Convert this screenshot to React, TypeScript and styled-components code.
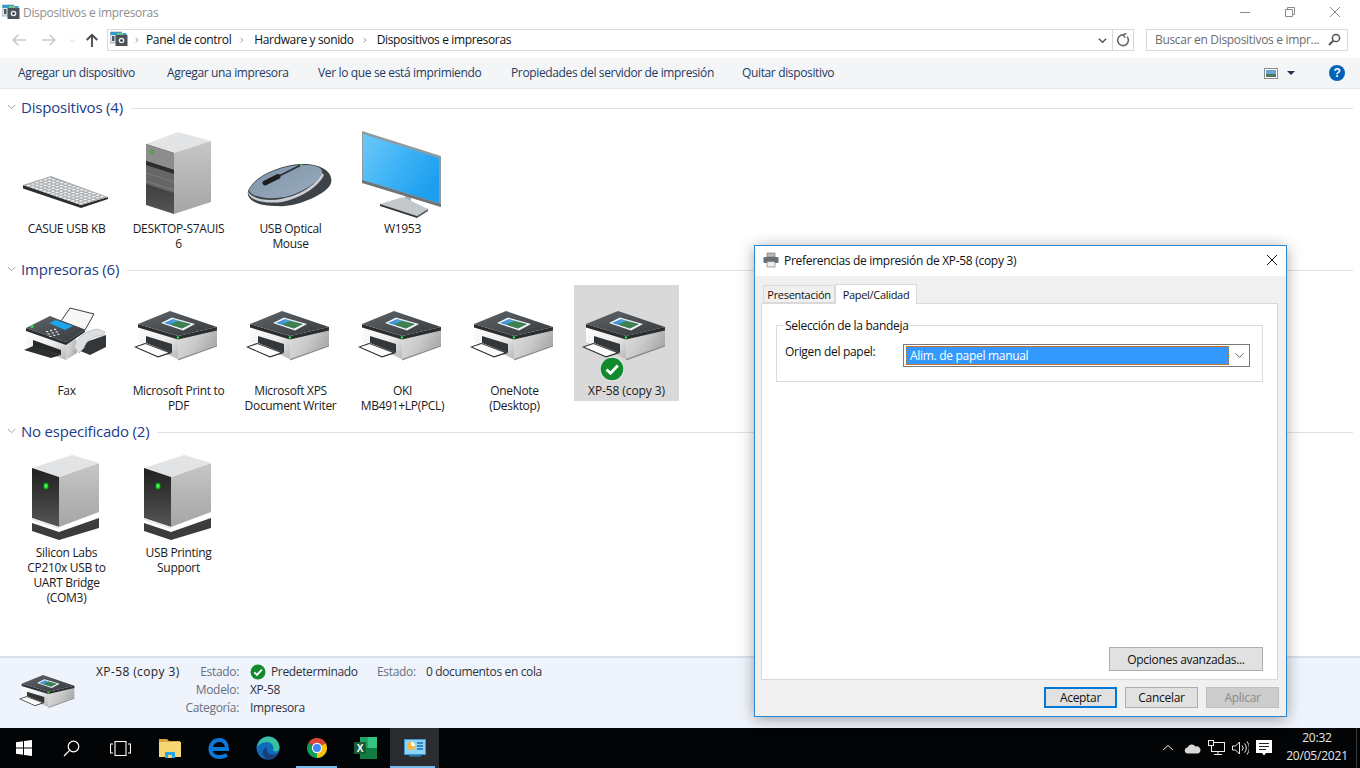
import React from 'react'
import styled, { createGlobalStyle } from 'styled-components'

const GlobalStyle = createGlobalStyle`
	html, body {
		margin: 0;
		padding: 0;
		background: #fff;
	}
	* {
		box-sizing: border-box;
	}
`

const Screen = styled.div`
	position: relative;
	display: flex;
	flex-direction: column;
	width: 1360px;
	height: 768px;
	overflow: hidden;
	background: #fff;
	color: #1a1a1a;
	font-family: 'Open Sans', 'Noto Sans', sans-serif;
	font-size: 12px;
	letter-spacing: -0.32px;
`

const TitleBar = styled.div`
	display: flex;
	align-items: center;
	height: 24px;
	padding-left: 2px;
	color: #8f8f8f;
`

const TitleText = styled.span`
	margin-left: 3px;
	flex: 1;
`

const CaptionButton = styled.div<{ $last?: boolean }>`
	display: flex;
	align-items: center;
	justify-content: center;
	width: 45px;
	height: 24px;
	margin-right: ${p => (p.$last ? '3px' : '0')};
`

const NavBar = styled.div`
	display: flex;
	align-items: flex-start;
	height: 34px;
	padding: 5px 12px 0 0;
`

const NavArrows = styled.div`
	display: flex;
	align-items: center;
	width: 107px;
	height: 22px;
	padding-left: 12px;
`

const NavArrow = styled.div<{ $w: number; $gap?: number }>`
	display: flex;
	justify-content: center;
	width: ${p => p.$w}px;
	margin-left: ${p => p.$gap ?? 0}px;
`

const Breadcrumb = styled.div`
	display: flex;
	align-items: center;
	width: 1027px;
	height: 22px;
	padding: 0 0 2px 2px;
	border: 1px solid #d9d9d9;
	color: #111;
	letter-spacing: -0.36px;
`

const Crumb = styled.span`
	white-space: nowrap;
`

const CrumbSep = styled.span<{ $w?: number }>`
	display: flex;
	justify-content: center;
	width: ${p => p.$w ?? 23}px;
	padding-top: 2px;
`

const BreadcrumbSpacer = styled.div`
	flex: 1;
`

const ComboArrow = styled.div`
	display: flex;
	align-items: center;
	justify-content: center;
	width: 20px;
	height: 20px;
	margin-bottom: -2px;
	border-right: 1px solid #d9d9d9;
`

const Refresh = styled.div`
	display: flex;
	align-items: center;
	justify-content: center;
	width: 20px;
	margin-bottom: -2px;
`

const SearchBox = styled.div`
	display: flex;
	align-items: center;
	justify-content: space-between;
	width: 202px;
	height: 22px;
	margin-left: 12px;
	padding: 0 6px 1px 8px;
	border: 1px solid #d9d9d9;
	color: #6d6d6d;
`

const Toolbar = styled.div`
	display: flex;
	align-items: center;
	height: 31px;
	padding-left: 18px;
	padding-right: 15px;
	background: #f4f5f7;
	border-bottom: 1px solid #e6e6e6;
	color: #1e3a5f;
	letter-spacing: -0.36px;
`

const ToolButton = styled.span<{ $width: number }>`
	width: ${p => p.$width}px;
	padding-bottom: 1px;
	white-space: nowrap;
`

const ToolSpacer = styled.div`
	flex: 1;
`

const ViewButton = styled.div`
	display: flex;
	align-items: center;
	gap: 9px;
	margin-right: 34px;
`

const Content = styled.main`
	flex: 1;
	min-height: 0;
`

const Section = styled.section`
	height: 162px;
	padding-top: 8px;
`

const SectionHeader = styled.div`
	display: flex;
	align-items: center;
	height: 20px;
	padding: 0 7px 0 7px;
`

const SectionTitle = styled.h2`
	margin: 0 8px 0 4px;
	color: #1e3b8a;
	font-size: 15px;
	font-weight: 400;
	letter-spacing: -0.2px;
	white-space: nowrap;
`

const SectionRule = styled.div`
	flex: 1;
	height: 1px;
	margin-top: 2px;
	background: #e2e2e2;
`

const ItemRow = styled.div`
	display: flex;
	align-items: flex-start;
	gap: 7px;
	margin-top: 6px;
	padding-left: 14px;
`

const Item = styled.div<{ $selected?: boolean }>`
	position: relative;
	width: 105px;
	padding: 2px 0 3px;
	background: ${p => (p.$selected ? '#d9d9d9' : 'transparent')};
	text-align: center;
	line-height: 15px;
	letter-spacing: ${p => (p.$selected ? '-0.1px' : 'inherit')};
`

const IconSlot = styled.div`
	width: 96px;
	height: 96px;
	margin-left: 5px;
	svg {
		display: block;
	}
`

const CheckBadge = styled.div`
	position: absolute;
	left: 26px;
	top: 72px;
	width: 24px;
	height: 24px;
	svg {
		display: block;
	}
`

const DetailsPane = styled.footer`
	display: flex;
	height: 72px;
	border-top: 2px solid #d7e1ee;
	background: #eff3fb;
`

const DetailsIcon = styled.div`
	width: 64px;
	height: 64px;
	margin: 1px 15px 0 17px;
	svg {
		display: block;
	}
`

const DetailsName = styled.div`
	width: 87px;
	padding-top: 5px;
	line-height: 18px;
	color: #222;
	letter-spacing: 0.38px;
	white-space: nowrap;
`

const Fields = styled.div`
	display: grid;
	grid-template-columns: 56px 116px 38px auto;
	grid-auto-rows: 18px;
	column-gap: 11px;
	padding-top: 5px;
	line-height: 18px;
`

const FieldLabel = styled.span`
	text-align: right;
	color: #67707c;
	white-space: nowrap;
`

const FieldValue = styled.span`
	display: flex;
	align-items: center;
	gap: 5px;
	color: #2c3340;
	letter-spacing: -0.36px;
	white-space: nowrap;
`

const Taskbar = styled.nav`
	display: flex;
	align-items: center;
	height: 40px;
	background: #030406;
	color: #e8e8e8;
`

const TaskSlot = styled.div<{ $active?: boolean; $running?: boolean }>`
	position: relative;
	display: flex;
	align-items: center;
	justify-content: center;
	width: 49px;
	height: 40px;
	background: ${p => (p.$active ? '#2b2c2f' : 'transparent')};
	&:first-child {
		width: 47px;
	}
	&::after {
		content: '';
		display: ${p => (p.$active || p.$running ? 'block' : 'none')};
		position: absolute;
		bottom: 0;
		left: ${p => (p.$active ? '0' : '4px')};
		right: 4px;
		height: 2px;
		background: #76b9ed;
	}
`

const TaskSpacer = styled.div`
	flex: 1;
`

const TrayIcon = styled.div`
	display: flex;
	align-items: center;
	justify-content: center;
	width: 24px;
	height: 40px;
`

const Clock = styled.div`
	width: 78px;
	margin: 0 0 2px 2px;
	text-align: center;
	line-height: 18px;
	letter-spacing: -0.2px;
`

const ShowDesktop = styled.div`
	width: 1px;
	height: 40px;
	margin: 0 3px 0 0;
	background: #3a3a3a;
`

const Dialog = styled.div`
	position: absolute;
	left: 754px;
	top: 245px;
	display: flex;
	flex-direction: column;
	width: 533px;
	height: 472px;
	border: 1px solid #2c88d2;
	background: #f0f0f0;
	box-shadow: 0 2px 14px rgba(0, 0, 0, 0.35);
	letter-spacing: -0.3px;
`

const DialogTitle = styled.div`
	display: flex;
	align-items: center;
	height: 30px;
	padding: 0 8px 2px;
	background: #fff;
	color: #111;
`

const DialogTitleText = styled.span`
	flex: 1;
	margin-left: 5px;
`

const Tabs = styled.div`
	position: relative;
	z-index: 1;
	display: flex;
	align-items: flex-end;
	height: 27px;
	padding-left: 8px;
`

const Tab = styled.div<{ $active?: boolean }>`
	display: flex;
	align-items: center;
	justify-content: center;
	height: ${p => (p.$active ? '20px' : '18px')};
	width: ${p => (p.$active ? '82px' : '72px')};
	margin-bottom: ${p => (p.$active ? '-1px' : '0')};
	border: 1px solid #d9d9d9;
	border-bottom: ${p => (p.$active ? 'none' : '1px solid #d9d9d9')};
	background: ${p => (p.$active ? '#fff' : '#f0f0f0')};
	color: #111;
	font-size: 11px;
`

const TabPanel = styled.div`
	display: flex;
	flex-direction: column;
	justify-content: space-between;
	height: 377px;
	margin: 0 8px 0 6px;
	padding: 14px 14px 8px 14px;
	border: 1px solid #d9d9d9;
	background: #fff;
`

const GroupBox = styled.fieldset`
	display: flex;
	align-items: flex-start;
	height: 64px;
	margin: 0;
	padding: 0 12px 0 8px;
	border: 1px solid #dcdcdc;
`

const GroupLegend = styled.legend`
	margin-left: -1px;
	padding: 0 1px;
	color: #111;
	line-height: 15px;
`

const SourceRow = styled.div`
	display: flex;
	align-items: flex-start;
	width: 100%;
	margin-top: 11px;
`

const SourceLabel = styled.span`
	width: 118px;
	color: #111;
	line-height: 15px;
`

const Combo = styled.div`
	display: flex;
	align-items: center;
	flex: 1;
	height: 23px;
	padding: 1px 0 1px 2px;
	border: 1px solid #7a7a7a;
	background: #fff;
`

const ComboValue = styled.div`
	flex: 1;
	height: 19px;
	padding-left: 3px;
	border: 1px dotted #c9701e;
	background: #3399ff;
	color: #fff;
	line-height: 17px;
`

const ComboChevron = styled.div`
	display: flex;
	justify-content: center;
	width: 20px;
`

const AdvancedRow = styled.div`
	display: flex;
	justify-content: flex-end;
`

const DialogButton = styled.button<{ $width: number; $primary?: boolean; $disabled?: boolean }>`
	width: ${p => p.$width}px;
	height: ${p => (p.$width > 100 ? 24 : 21)}px;
	padding: 0;
	border: ${p => (p.$primary ? '2px solid #0078d7' : p.$disabled ? '1px solid #bfbfbf' : '1px solid #adadad')};
	background: ${p => (p.$disabled ? '#cccccc' : '#e1e1e1')};
	color: ${p => (p.$disabled ? '#8a8a8a' : '#111')};
	font: inherit;
	letter-spacing: inherit;
`

const DialogFooter = styled.div`
	display: flex;
	justify-content: flex-end;
	gap: 8px;
	padding: 7px 7px 0 0;
`

const Thin = ({ d, size = 12, box = 12, color = '#555', w = 1 }: { d: string; size?: number; box?: number; color?: string; w?: number }) => (
	<svg width={size} height={size} viewBox={`0 0 ${box} ${box}`} fill="none" stroke={color} strokeWidth={w}>
		<path d={d} />
	</svg>
)

const ExplorerGlyph = () => (
	<svg width="18" height="16" viewBox="0 0 18 16">
		<rect x="0" y="1" width="12" height="11" fill="#dfe6ea" stroke="#7c8a92" strokeWidth="0.6" />
		<rect x="0.5" y="1" width="11" height="3" fill="#2f9fc9" />
		<rect x="2" y="5" width="2.5" height="5" fill="#4d5a62" />
		<rect x="5.5" y="4" width="12" height="11" fill="#4a5359" />
		<rect x="7" y="2" width="5" height="2" fill="#7cc36a" />
		<rect x="12.5" y="2" width="4" height="2" fill="#2f9fc9" />
		<circle cx="11.5" cy="9.5" r="2.8" fill="#eef1f3" />
		<circle cx="11.5" cy="9.5" r="1.3" fill="#23282c" />
	</svg>
)

const Defs = () => (
	<defs>
		<linearGradient id="frontFace" x1="0" y1="0" x2="0.9" y2="1">
			<stop offset="0" stopColor="#ffffff" />
			<stop offset="0.55" stopColor="#eeeeee" />
			<stop offset="1" stopColor="#bdbdbd" />
		</linearGradient>
		<linearGradient id="sideFace" x1="0" y1="0" x2="1" y2="0.5">
			<stop offset="0" stopColor="#e2e2e2" />
			<stop offset="0.55" stopColor="#c9c9c9" />
			<stop offset="1" stopColor="#a9a9a9" />
		</linearGradient>
		<linearGradient id="lidFace" x1="0" y1="0" x2="0.9" y2="1">
			<stop offset="0" stopColor="#60656a" />
			<stop offset="1" stopColor="#383c40" />
		</linearGradient>
		<linearGradient id="towerSide" x1="0" y1="0" x2="0" y2="1">
			<stop offset="0" stopColor="#c6c6c6" />
			<stop offset="1" stopColor="#a5a5a5" />
		</linearGradient>
		<linearGradient id="darkFront" x1="0" y1="0" x2="0" y2="1">
			<stop offset="0" stopColor="#1f1f1f" />
			<stop offset="1" stopColor="#565656" />
		</linearGradient>
		<linearGradient id="screenBlue" x1="0" y1="0" x2="1" y2="0.6">
			<stop offset="0" stopColor="#6cc9f8" />
			<stop offset="0.55" stopColor="#3db2f5" />
			<stop offset="1" stopColor="#1d9ff0" />
		</linearGradient>
		<linearGradient id="mouseTop" x1="0" y1="0" x2="1" y2="1">
			<stop offset="0" stopColor="#7d93a9" />
			<stop offset="1" stopColor="#9cadbe" />
		</linearGradient>
		<linearGradient id="photoSky" x1="0" y1="0" x2="1" y2="0">
			<stop offset="0" stopColor="#2f8fdc" />
			<stop offset="1" stopColor="#76b6de" />
		</linearGradient>
		<radialGradient id="ledGlow">
			<stop offset="0" stopColor="#7dff7d" />
			<stop offset="0.6" stopColor="#19d12c" />
			<stop offset="1" stopColor="#0c6a1a" />
		</radialGradient>
	</defs>
)

const PrinterIcon = ({ size = 96 }: { size?: number }) => (
	<svg width={size} height={size} viewBox="0 0 96 96">
		<Defs />
		<polygon points="47,50 86,40 86,58 47,72" fill="url(#sideFace)" />
		<polygon points="47,72 86,58 86,59.5 47,73.5" fill="#8a8a8a" />
		<polygon points="7,38 47,50 47,72 7,55" fill="url(#frontFace)" />
		<polygon points="7,37 47,49 86,40 86,43.5 47,52.5 7,40.5" fill="#2b2e31" />
		<polygon points="7,37 39,24 86,40 47,49" fill="url(#lidFace)" />
		<polygon points="15,49 41,57 41,66 15,56" fill="#34373a" />
		<polygon points="3,60 14,56 41,66 27,70.5" fill="#2a2c2e" />
		<polygon points="5.5,60 14.5,57 37.5,65.8 27,69.3" fill="#fdfdfd" />
		<polygon points="30,36 41,30.5 64,37 52,43.5" fill="#f6f6f6" />
		<polygon points="33,36 42,32 60,37 51,41.5" fill="url(#photoSky)" />
		<polygon points="39,37.5 47,34 60,37 51,41.5" fill="#3f7f4f" />
		<circle cx="47" cy="50.5" r="1.3" fill="#35e04a" />
	</svg>
)

const FaxIcon = () => (
	<svg width="96" height="96" viewBox="0 0 96 96">
		<Defs />
		<polygon points="42,34 51,21 75,27 66,43" fill="#f7f7f7" stroke="#3c3f42" strokeWidth="1" />
		<polygon points="59,63 64,56 87,48 87,60 71,68" fill="#33373a" />
		<polygon points="47,55 57,52 58,66 47,73" fill="url(#sideFace)" />
		<polygon points="7,43 47,56 47,73 7,58" fill="url(#frontFace)" />
		<polygon points="7,41 31,29 66,43 47,55" fill="url(#lidFace)" />
		<polygon points="7,41 47,55 66,43 66,45 47,58 7,44" fill="#2b2e31" />
		<polygon points="30,36 37,33 54,39 46,43" fill="#1fa4ee" />
		<g fill="#e6e6e6">
			{[0, 1, 2].map(r =>
				[0, 1, 2].map(c => <rect key={`${r}-${c}`} x={27 + c * 4 + r * 1.6} y={44 + r * 2.4 - c * 1.1} width="2.2" height="1.2" />),
			)}
		</g>
		<circle cx="13" cy="39.5" r="1.5" fill="#35e04a" />
		<polygon points="14,53 42,63 42,68 14,60" fill="#26282a" />
		<polygon points="5,63 14,59 42,68 32,71" fill="#2d2f31" />
		<path d="M55 60 C58 50 68 43 79 42 L86 45 L84 49 C74 48 67 54 65 61 L60 66 Z" fill="#dcdfe0" stroke="#a6abae" strokeWidth="0.6" />
	</svg>
)

const KeyboardIcon = () => {
	const keys = []
	const rows = 6
	const cols = 14
	for (let r = 0; r < rows; r++) {
		for (let c = 0; c < cols; c++) {
			const u = (v: number) => (c + v) / cols
			const t = (v: number) => (r + v) / rows
			const pt = (a: number, b: number) => `${6 + 56 * u(a) + 25 * t(b)},${60.5 + 19.5 * u(a) - 8.5 * t(b)}`
			keys.push(<polygon key={`${r}-${c}`} points={`${pt(0.16, 0.16)} ${pt(0.78, 0.16)} ${pt(0.78, 0.78)} ${pt(0.16, 0.78)}`} fill="#f4f4f4" />)
		}
	}
	return (
		<svg width="96" height="96" viewBox="0 0 96 96">
			<Defs />
			<polygon points="4,60 62,80 89,72 89,74 62,83 4,63.5" fill="#2b2d2f" />
			<polygon points="4,60 32,51 89,72 62,80" fill="#a9adb0" />
			{keys}
		</svg>
	)
}

const TowerIcon = () => (
	<svg width="96" height="96" viewBox="0 0 96 96">
		<Defs />
		<polygon points="15,19 47,7 80,16 43,28" fill="#e3e4e6" />
		<polygon points="43,28 80,16 80,77 43,89" fill="url(#towerSide)" />
		<polygon points="15,19 43,28 43,89 15,80" fill="url(#darkFront)" />
		<polygon points="15,19 43,28 43,45 15,36" fill="#8d8d8d" />
		<polygon points="15,36 43,45 43,49 15,40" fill="#2d2d2d" />
		<polygon points="15,40 43,49 43,68 15,59" fill="#666" />
		<line x1="15" y1="48" x2="43" y2="57" stroke="#888" strokeWidth="0.6" />
		<line x1="15" y1="56" x2="43" y2="65" stroke="#888" strokeWidth="0.6" />
		<circle cx="21" cy="27" r="1.7" fill="url(#ledGlow)" />
	</svg>
)

const MouseIcon = () => (
	<svg width="96" height="96" viewBox="0 0 96 96">
		<Defs />
		<path d="M5 66 C10 52 36 40 58 39 C76 38 91 46 88 58 C85 69 52 83 35 81 C16 81 3 76 5 66 Z" fill="#3e4347" />
		<path d="M5 66 C7 73 24 77 38 74 C54 71 72 62 79 48 L81 50 C75 63 55 74 39 77 C23 79 5 76 5 66 Z" fill="#c9cfd4" />
		<path d="M6 65 C12 52 36 41 58 40 C72 39.5 80 42 79 48 C75 58 58 68 42 72 C26 75 7 72 6 65 Z" fill="url(#mouseTop)" />
		<path d="M22 58 L58 40" stroke="#2a2d30" strokeWidth="1.8" fill="none" />
		<path d="M22 58 L35 51.5" stroke="#1c1e20" strokeWidth="5" strokeLinecap="round" fill="none" />
		<circle cx="58" cy="40" r="1" fill="#35e04a" />
	</svg>
)

const MonitorIcon = () => (
	<svg width="96" height="96" viewBox="0 0 96 96">
		<Defs />
		<polygon points="50,70 56,72 56,79 50,78" fill="#a9b0b5" />
		<polygon points="25,79 48,72 73,84 62,91" fill="#c3c8cb" />
		<polygon points="25,79 62,91 62,93 25,81" fill="#34373a" />
		<polygon points="62,91 73,84 73,86 62,93" fill="#55595c" />
		<polygon points="7,6 86,31 86,82 7,57" fill="#8f9aa2" />
		<polygon points="8,9 84,33 84,78 8,55" fill="url(#screenBlue)" />
		<polygon points="7,55 86,79 86,82 7,58" fill="#6d7478" />
	</svg>
)

const DriveIcon = () => (
	<svg width="96" height="96" viewBox="0 0 96 96">
		<Defs />
		<polygon points="13,74 40,83 80,69 80,79 40,91 13,82" fill="#3c3c3c" />
		<polygon points="40,28 80,14 80,63 40,78" fill="url(#towerSide)" />
		<polygon points="13,19 53,6 80,14 40,28" fill="#e2e3e5" />
		<polygon points="13,19 40,28 40,78 13,69" fill="url(#darkFront)" />
		<polygon points="13,69 40,78 40,80 13,71" fill="#e8e8e8" />
		<ellipse cx="27" cy="37" rx="2.8" ry="3.6" fill="url(#ledGlow)" />
	</svg>
)

const SmallCheck = ({ size }: { size: number }) => (
	<svg width={size} height={size} viewBox="0 0 24 24">
		<circle cx="12" cy="12" r="12" fill="#fff" opacity="0.6" />
		<circle cx="12" cy="12" r="11.3" fill="#128a2e" />
		<path d="M6.5 12.5 L10.5 16.3 L17.8 8.5" fill="none" stroke="#fff" strokeWidth="2.8" />
	</svg>
)

const ChromeIcon = () => (
	<svg width="22" height="22" viewBox="0 0 24 24">
		<path d="M12 12 L2.5 6.5 A11 11 0 0 1 21.5 6.5 Z" fill="#db4437" />
		<path d="M12 12 L21.5 6.5 A11 11 0 0 1 12 23 Z" fill="#f4c20d" />
		<path d="M12 12 L12 23 A11 11 0 0 1 2.5 6.5 Z" fill="#0f9d58" />
		<circle cx="12" cy="12" r="5.6" fill="#fff" />
		<circle cx="12" cy="12" r="4.4" fill="#4285f4" />
	</svg>
)

const EdgeOldIcon = () => (
	<svg width="24" height="24" viewBox="0 0 24 24" fill="none">
		<path d="M5 13 H20 C20 7 17 4 12.5 4 C7 4 3.5 8 3.5 13 C3.5 18 7.5 21 12.5 21 C15.5 21 18 20 20 19" stroke="#0a78d7" strokeWidth="4" />
	</svg>
)

const EdgeNewIcon = () => (
	<svg width="24" height="24" viewBox="0 0 24 24">
		<circle cx="12" cy="12" r="11.5" fill="#0f6cbd" />
		<path d="M1 12 C2 4 8 0.5 12 0.5 C19 0.5 23.5 6 23.5 12 C23.5 15 20 16 17 15 C19 10 15 6 11 6 C6 6 2 9 1 12 Z" fill="#35c1a0" />
		<path d="M8 21 C5 17 7 12 11 11 C9 15 13 19 18 18.5 C19.5 18.3 21 18 22 17 C20 21 16 23.5 12 23.5 C10.5 23.5 9 22.5 8 21 Z" fill="#1b3f7a" />
	</svg>
)

const FolderIcon = () => (
	<svg width="24" height="22" viewBox="0 0 24 22">
		<path d="M1 2 H9 L11 4 H22 V6 H1 Z" fill="#d9a93f" />
		<rect x="1" y="5" width="22" height="15" fill="#f7d774" />
		<rect x="7" y="15" width="10" height="6" fill="#2aa7e0" />
		<rect x="10" y="18" width="4" height="3" fill="#f7d774" />
	</svg>
)

const ExcelIcon = () => (
	<svg width="25" height="24" viewBox="0 0 25 24">
		<rect x="7" y="1" width="17" height="22" fill="#21a366" />
		<rect x="7" y="12" width="17" height="11" fill="#107c41" />
		<rect x="15" y="1" width="9" height="11" fill="#33c481" />
		<rect x="1" y="6" width="12" height="12" fill="#185c37" />
		<text x="7" y="15.5" textAnchor="middle" fill="#fff" fontSize="10" fontWeight="700" fontFamily="'Liberation Sans', sans-serif">
			X
		</text>
	</svg>
)

const ControlPanelIcon = () => (
	<svg width="22" height="18" viewBox="0 0 22 18">
		<rect x="0.5" y="0.5" width="21" height="15" fill="#8fd3f4" stroke="#3a98d8" />
		<circle cx="7" cy="7" r="4" fill="#f5b83d" />
		<path d="M7 7 V3 A4 4 0 0 1 11 7 Z" fill="#fff" />
		<path d="M13 4 H19 M13 7 H19 M13 10 H19" stroke="#1d6fb8" strokeWidth="1.4" />
		<rect x="5" y="15.5" width="12" height="2" fill="#2d7fc0" />
	</svg>
)

const Chevron = () => <Thin d="M3.5 2.5 L6.5 5.5 L3.5 8.5" size={9} color="#888" w={1.2} />

type Entry = { icon: React.ReactNode; lines: string[]; selected?: boolean }

const sections: { title: string; items: Entry[] }[] = [
	{
		title: 'Dispositivos (4)',
		items: [
			{ icon: <KeyboardIcon />, lines: ['CASUE USB KB'] },
			{ icon: <TowerIcon />, lines: ['DESKTOP-S7AUIS', '6'] },
			{ icon: <MouseIcon />, lines: ['USB Optical', 'Mouse'] },
			{ icon: <MonitorIcon />, lines: ['W1953'] },
		],
	},
	{
		title: 'Impresoras (6)',
		items: [
			{ icon: <FaxIcon />, lines: ['Fax'] },
			{ icon: <PrinterIcon />, lines: ['Microsoft Print to', 'PDF'] },
			{ icon: <PrinterIcon />, lines: ['Microsoft XPS', 'Document Writer'] },
			{ icon: <PrinterIcon />, lines: ['OKI', 'MB491+LP(PCL)'] },
			{ icon: <PrinterIcon />, lines: ['OneNote', '(Desktop)'] },
			{ icon: <PrinterIcon />, lines: ['XP-58 (copy 3)'], selected: true },
		],
	},
	{
		title: 'No especificado (2)',
		items: [
			{ icon: <DriveIcon />, lines: ['Silicon Labs', 'CP210x USB to', 'UART Bridge', '(COM3)'] },
			{ icon: <DriveIcon />, lines: ['USB Printing', 'Support'] },
		],
	},
]

const App = () => (
	<Screen>
		<GlobalStyle />
		<TitleBar>
			<ExplorerGlyph />
			<TitleText>Dispositivos e impresoras</TitleText>
			<CaptionButton>
				<Thin d="M1 6.5 H11" color="#8a8a8a" />
			</CaptionButton>
			<CaptionButton>
				<Thin d="M1.5 3.5 H8.5 V10.5 H1.5 Z M3.5 3.5 V1.5 H10.5 V8.5 H8.5" color="#8a8a8a" />
			</CaptionButton>
			<CaptionButton $last>
				<Thin d="M1 1 L11 11 M11 1 L1 11" color="#8a8a8a" />
			</CaptionButton>
		</TitleBar>
		<NavBar>
			<NavArrows>
				<NavArrow $w={14}>
					<Thin d="M1 6 H12 M5.5 1.5 L1 6 L5.5 10.5" size={14} color="#c9c9c9" w={1.4} />
				</NavArrow>
				<NavArrow $w={16} $gap={15}>
					<Thin d="M0 6 H11 M6.5 1.5 L11 6 L6.5 10.5" size={14} color="#c9c9c9" w={1.4} />
				</NavArrow>
				<NavArrow $w={10} $gap={10}>
					<Thin d="M2 4.5 L6 8 L10 4.5" size={9} color="#c9c9c9" />
				</NavArrow>
				<NavArrow $w={16} $gap={7}>
					<Thin d="M6 12 V1.5 M1.5 6 L6 1.5 L10.5 6" size={14} color="#4a4a4a" w={1.6} />
				</NavArrow>
			</NavArrows>
			<Breadcrumb>
				<ExplorerGlyph />
				<CrumbSep $w={18}>
					<Chevron />
				</CrumbSep>
				<Crumb>Panel de control</Crumb>
				<CrumbSep>
					<Chevron />
				</CrumbSep>
				<Crumb>Hardware y sonido</Crumb>
				<CrumbSep>
					<Chevron />
				</CrumbSep>
				<Crumb>Dispositivos e impresoras</Crumb>
				<BreadcrumbSpacer />
				<ComboArrow>
					<Thin d="M2 4 L6 8 L10 4" size={11} color="#555" w={1.6} />
				</ComboArrow>
				<Refresh>
					<Thin d="M9.5 3.2 A4.6 4.6 0 1 1 6 1.6 M6 1.6 L8.8 0.2 M6 1.6 L7.8 4" size={14} color="#666" w={1.3} />
				</Refresh>
			</Breadcrumb>
			<SearchBox>
				<span>Buscar en Dispositivos e impr...</span>
				<svg width="13" height="13" viewBox="0 0 13 13" fill="none" stroke="#555" strokeWidth="1.5">
					<circle cx="8" cy="5" r="3.6" />
					<path d="M5.4 7.6 L1 12" strokeWidth="2" />
				</svg>
			</SearchBox>
		</NavBar>
		<Toolbar>
			<ToolButton $width={149}>Agregar un dispositivo</ToolButton>
			<ToolButton $width={151}>Agregar una impresora</ToolButton>
			<ToolButton $width={193}>Ver lo que se está imprimiendo</ToolButton>
			<ToolButton $width={231}>Propiedades del servidor de impresión</ToolButton>
			<ToolButton $width={100}>Quitar dispositivo</ToolButton>
			<ToolSpacer />
			<ViewButton>
				<svg width="14" height="11" viewBox="0 0 14 11">
					<rect x="0.5" y="0.5" width="13" height="10" fill="#fff" stroke="#8c8c8c" />
					<rect x="2" y="2" width="10" height="4" fill="#6aa5d8" />
					<rect x="2" y="6" width="10" height="3" fill="#4d7a5f" />
				</svg>
				<svg width="8" height="4" viewBox="0 0 8 4">
					<path d="M0 0 H8 L4 4 Z" fill="#1e2f4f" />
				</svg>
			</ViewButton>
			<svg width="16" height="16" viewBox="0 0 16 16">
				<circle cx="8" cy="8" r="8" fill="#0063b8" />
				<text x="8" y="12.2" textAnchor="middle" fill="#fff" fontSize="12" fontWeight="700" fontFamily="'Liberation Sans', sans-serif">
					?
				</text>
			</svg>
		</Toolbar>
		<Content>
			{sections.map(section => (
				<Section key={section.title}>
					<SectionHeader>
						<Thin d="M1 3.5 L5.5 8 L10 3.5" size={10} color="#8293a8" />
						<SectionTitle>{section.title}</SectionTitle>
						<SectionRule />
					</SectionHeader>
					<ItemRow>
						{section.items.map(item => (
							<Item key={item.lines.join(' ')} $selected={item.selected}>
								<IconSlot>{item.icon}</IconSlot>
								{item.selected && (
									<CheckBadge>
										<SmallCheck size={24} />
									</CheckBadge>
								)}
								{item.lines.map(line => (
									<div key={line}>{line}</div>
								))}
							</Item>
						))}
					</ItemRow>
				</Section>
			))}
		</Content>
		<DetailsPane>
			<DetailsIcon>
				<PrinterIcon size={64} />
			</DetailsIcon>
			<DetailsName>XP-58 (copy 3)</DetailsName>
			<Fields>
				<FieldLabel>Estado:</FieldLabel>
				<FieldValue>
					<SmallCheck size={16} />
					Predeterminado
				</FieldValue>
				<FieldLabel>Estado:</FieldLabel>
				<FieldValue>0 documentos en cola</FieldValue>
				<FieldLabel>Modelo:</FieldLabel>
				<FieldValue>XP-58</FieldValue>
				<span />
				<span />
				<FieldLabel>Categoría:</FieldLabel>
				<FieldValue>Impresora</FieldValue>
			</Fields>
		</DetailsPane>
		<Taskbar>
			<TaskSlot>
				<svg width="16" height="16" viewBox="0 0 16 16">
					<path d="M0 2.2 L7 1.2 V7.5 H0 Z M8 1 L16 0 V7.5 H8 Z M0 8.5 H7 V14.8 L0 13.8 Z M8 8.5 H16 V16 L8 15 Z" fill="#fff" />
				</svg>
			</TaskSlot>
			<TaskSlot>
				<svg width="17" height="17" viewBox="0 0 17 17" fill="none" stroke="#fff" strokeWidth="1.2">
					<circle cx="10.5" cy="6.5" r="5.3" />
					<path d="M6.6 10.4 L1 16" />
				</svg>
			</TaskSlot>
			<TaskSlot>
				<svg width="21" height="15" viewBox="0 0 21 15" fill="none" stroke="#fff" strokeWidth="1.1">
					<rect x="5" y="0.5" width="11" height="14" />
					<path d="M3 3 H0.5 V12 H3 M18 3 H20.5 V12 H18" />
				</svg>
			</TaskSlot>
			<TaskSlot>
				<FolderIcon />
			</TaskSlot>
			<TaskSlot>
				<EdgeOldIcon />
			</TaskSlot>
			<TaskSlot>
				<EdgeNewIcon />
			</TaskSlot>
			<TaskSlot $running>
				<ChromeIcon />
			</TaskSlot>
			<TaskSlot>
				<ExcelIcon />
			</TaskSlot>
			<TaskSlot $active>
				<ControlPanelIcon />
			</TaskSlot>
			<TaskSpacer />
			<TrayIcon>
				<Thin d="M1 8 L6 3.5 L11 8" size={12} color="#eee" />
			</TrayIcon>
			<TrayIcon>
				<svg width="17" height="11" viewBox="0 0 17 11">
					<path d="M3 10.5 A3 3 0 0 1 3.5 4.6 A4.4 4.4 0 0 1 11.5 3.6 A3.6 3.6 0 0 1 14 10.5 Z" fill="#d8d8d8" />
				</svg>
			</TrayIcon>
			<TrayIcon>
				<svg width="17" height="16" viewBox="0 0 17 16" fill="none" stroke="#eee">
					<rect x="3.5" y="2.5" width="13" height="9" />
					<rect x="0.5" y="0.5" width="5" height="5" fill="#030406" />
					<path d="M10 11.5 V14.5 M6 14.5 H14" />
				</svg>
			</TrayIcon>
			<TrayIcon>
				<svg width="17" height="14" viewBox="0 0 17 14" fill="none" stroke="#eee">
					<path d="M0.5 5 H3.5 L7.5 1 V13 L3.5 9 H0.5 Z" />
					<path d="M10 4.5 A3.5 3.5 0 0 1 10 9.5 M12.5 2.5 A6.5 6.5 0 0 1 12.5 11.5 M15 0.5 A10 10 0 0 1 15 13.5" />
				</svg>
			</TrayIcon>
			<TrayIcon>
				<svg width="16" height="16" viewBox="0 0 16 16">
					<path d="M0 0 H16 V13 H10 L8 15.5 L6 13 H0 Z" fill="#fff" />
					<path d="M3 3.5 H13 M3 6.5 H13 M3 9.5 H10" stroke="#222" strokeWidth="1" />
				</svg>
			</TrayIcon>
			<Clock>
				<div>20:32</div>
				<div>20/05/2021</div>
			</Clock>
			<ShowDesktop />
		</Taskbar>
		<Dialog>
			<DialogTitle>
				<svg width="16" height="16" viewBox="0 0 16 16">
					<rect x="4" y="1" width="8" height="4" fill="#b8b8b8" stroke="#6f6f6f" strokeWidth="0.6" />
					<rect x="0.5" y="5" width="15" height="6" rx="1" fill="#6a6f73" />
					<rect x="4" y="9.5" width="8" height="5.5" fill="#e8edf1" stroke="#6f6f6f" strokeWidth="0.6" />
				</svg>
				<DialogTitleText>Preferencias de impresión de XP-58 (copy 3)</DialogTitleText>
				<Thin d="M1 1 L11 11 M11 1 L1 11" color="#111" />
			</DialogTitle>
			<Tabs>
				<Tab>Presentación</Tab>
				<Tab $active>Papel/Calidad</Tab>
			</Tabs>
			<TabPanel>
				<GroupBox>
					<GroupLegend>Selección de la bandeja</GroupLegend>
					<SourceRow>
						<SourceLabel>Origen del papel:</SourceLabel>
						<Combo>
							<ComboValue>Alim. de papel manual</ComboValue>
							<ComboChevron>
								<Thin d="M1.5 3.5 L6 8 L10.5 3.5" size={11} color="#555" />
							</ComboChevron>
						</Combo>
					</SourceRow>
				</GroupBox>
				<AdvancedRow>
					<DialogButton $width={154}>Opciones avanzadas...</DialogButton>
				</AdvancedRow>
			</TabPanel>
			<DialogFooter>
				<DialogButton $width={73} $primary>
					Aceptar
				</DialogButton>
				<DialogButton $width={73}>Cancelar</DialogButton>
				<DialogButton $width={73} $disabled>
					Aplicar
				</DialogButton>
			</DialogFooter>
		</Dialog>
	</Screen>
)

export default App
